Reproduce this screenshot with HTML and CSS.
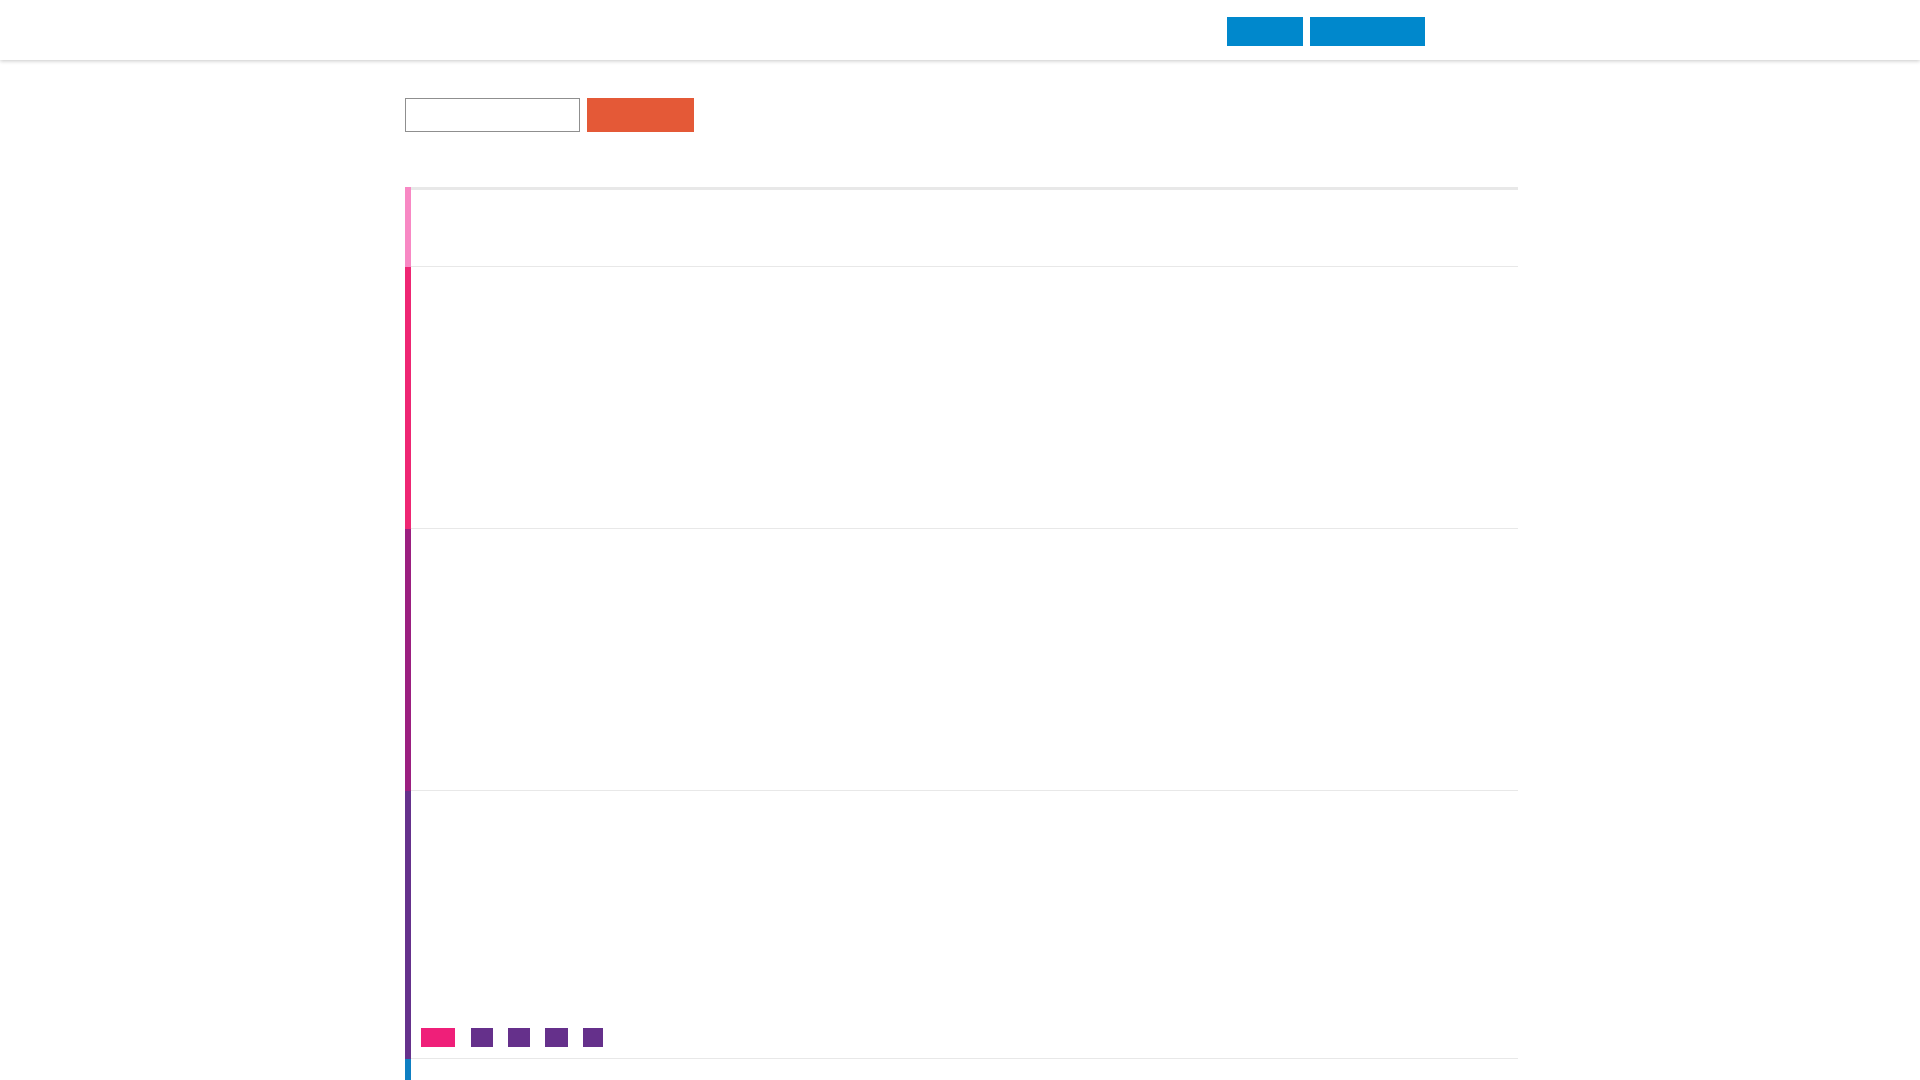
FILE: index.html
```html
<!DOCTYPE html>
<html>
<head>
<meta charset="utf-8">
<link rel="stylesheet" href="styles.css">
</head>
<body>
<header class="topbar">
  <div class="topbar-actions">
    <span class="btn-blue btn-a"></span>
    <span class="btn-blue btn-b"></span>
  </div>
</header>
<main class="container">
  <div class="search">
    <span class="search-input"></span>
    <span class="search-btn"></span>
  </div>
  <div class="list">
    <div class="row row-1">
      <div class="bar bar-pink-light"></div>
      <div class="row-content first"></div>
    </div>
    <div class="row row-2">
      <div class="bar bar-pink"></div>
      <div class="row-content"></div>
    </div>
    <div class="row row-3">
      <div class="bar bar-magenta"></div>
      <div class="row-content"></div>
    </div>
    <div class="row row-4">
      <div class="bar bar-purple"></div>
      <div class="row-content tags-content">
        <div class="tags">
          <span class="tag tag-pink"></span>
          <span class="tag tag-purple w22"></span>
          <span class="tag tag-purple w22"></span>
          <span class="tag tag-purple w23"></span>
          <span class="tag tag-purple w20"></span>
        </div>
      </div>
    </div>
    <div class="row row-5">
      <div class="bar bar-blue"></div>
      <div class="row-content"></div>
    </div>
  </div>
</main>
</body>
</html>
```

FILE: styles.css
```css
* { box-sizing: border-box; }
html, body { margin: 0; padding: 0; background: #fff; font-family: "Liberation Sans", Arial, sans-serif; }
body { width: 1920px; height: 1080px; overflow: hidden; }

.topbar {
  height: 60px;
  background: #fff;
  box-shadow: 0 1px 4px rgba(0,0,0,0.22);
  position: relative;
  z-index: 2;
  display: flex;
  align-items: flex-start;
}
.topbar-actions {
  display: flex;
  gap: 7px;
  margin-left: 1227px;
  margin-top: 17px;
}
.btn-blue { display: block; height: 29px; background: #0088cc; }
.btn-a { width: 76px; }
.btn-b { width: 115px; }

.container {
  width: 1113px;
  margin-left: 405px;
  padding-top: 38px;
}
.search { display: flex; gap: 7px; height: 34px; }
.search-input { display: block; width: 175px; height: 34px; border: 1px solid #8f8f8f; background: #fff; }
.search-btn { display: block; width: 107px; height: 34px; background: #e45937; }

.list { margin-top: 55px; }
.row { display: flex; }
.bar { width: 6px; flex: none; }
.row-content { flex: 1; border-bottom: 1px solid #e8e8e8; }
.row-content.first { border-top: 3px solid #e8e8e8; }

.row-1 { height: 80px; }
.row-2 { height: 262px; }
.row-3 { height: 262px; }
.row-4 { height: 268px; }
.row-5 { height: 40px; }
.row-5 .row-content { border-bottom: none; }

.bar-pink-light { background: #f888c4; }
.bar-pink { background: #ee2673; }
.bar-magenta { background: #9b1f80; }
.bar-purple { background: #65318c; }
.bar-blue { background: #0e7fc2; }

.tags-content { display: flex; flex-direction: column; justify-content: flex-end; padding: 0 0 11px 10px; }
.tags { display: flex; gap: 15px; height: 19px; }
.tag { display: block; height: 19px; }
.tag-pink { width: 34px; background: #ef1f79; margin-right: 1px; }
.tag-purple { background: #65308b; }
.w22 { width: 22px; }
.w23 { width: 23px; }
.w20 { width: 20px; }
```
